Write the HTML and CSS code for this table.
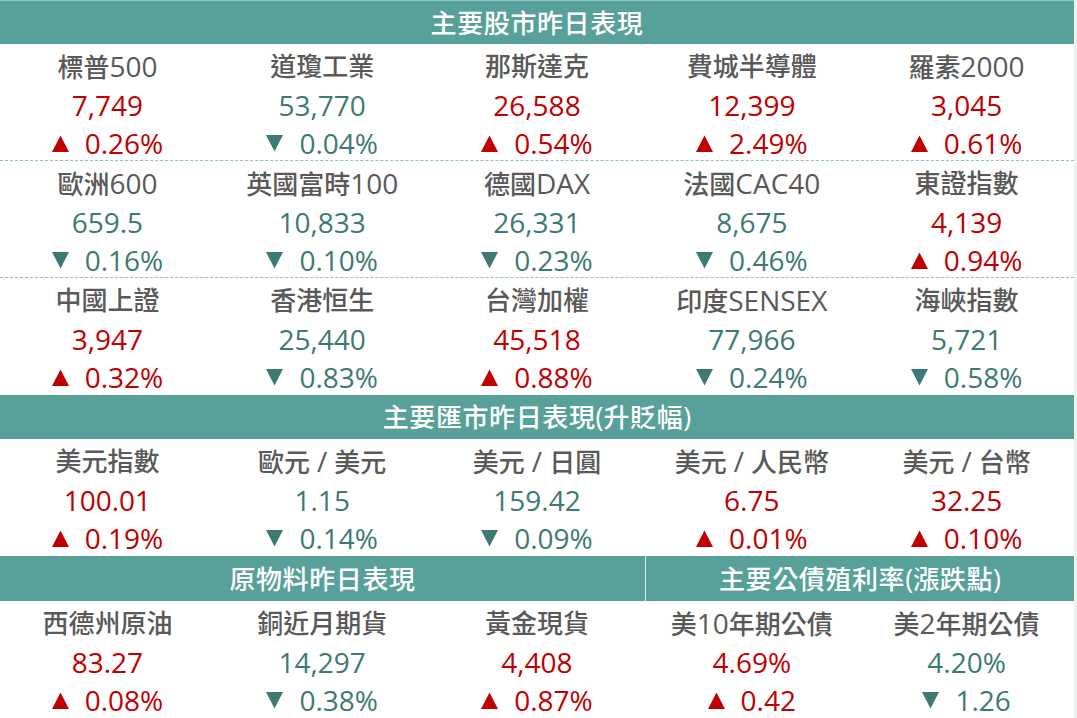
FILE: index.html
```html
<!DOCTYPE html>
<html lang="zh-Hant">
<head>
<meta charset="utf-8">
<title>市場表現</title>
<link rel="stylesheet" href="styles.css">
</head>
<body>
<div class="board">
  <div class="hd hd-top">主要股市昨日表現</div>

  <div class="block dash">
    <div class="cell"><div class="name">標普<span class="la">500</span></div><div class="val up">7,749</div><div class="chg up"><svg class="tri" viewBox="0 0 17 17"><path d="M8.5 0.5L17 17H0Z"/></svg><span>0.26%</span></div></div>
    <div class="cell"><div class="name">道瓊工業</div><div class="val dn">53,770</div><div class="chg dn"><svg class="tri" viewBox="0 0 17 17"><path d="M0 0H17L8.5 16.5Z"/></svg><span>0.04%</span></div></div>
    <div class="cell"><div class="name">那斯達克</div><div class="val up">26,588</div><div class="chg up"><svg class="tri" viewBox="0 0 17 17"><path d="M8.5 0.5L17 17H0Z"/></svg><span>0.54%</span></div></div>
    <div class="cell"><div class="name">費城半導體</div><div class="val up">12,399</div><div class="chg up"><svg class="tri" viewBox="0 0 17 17"><path d="M8.5 0.5L17 17H0Z"/></svg><span>2.49%</span></div></div>
    <div class="cell"><div class="name">羅素<span class="la">2000</span></div><div class="val up">3,045</div><div class="chg up"><svg class="tri" viewBox="0 0 17 17"><path d="M8.5 0.5L17 17H0Z"/></svg><span>0.61%</span></div></div>
  </div>

  <div class="block dash">
    <div class="cell"><div class="name">歐洲<span class="la">600</span></div><div class="val dn">659.5</div><div class="chg dn"><svg class="tri" viewBox="0 0 17 17"><path d="M0 0H17L8.5 16.5Z"/></svg><span>0.16%</span></div></div>
    <div class="cell"><div class="name">英國富時<span class="la">100</span></div><div class="val dn">10,833</div><div class="chg dn"><svg class="tri" viewBox="0 0 17 17"><path d="M0 0H17L8.5 16.5Z"/></svg><span>0.10%</span></div></div>
    <div class="cell"><div class="name">德國<span class="la">DAX</span></div><div class="val dn">26,331</div><div class="chg dn"><svg class="tri" viewBox="0 0 17 17"><path d="M0 0H17L8.5 16.5Z"/></svg><span>0.23%</span></div></div>
    <div class="cell"><div class="name">法國<span class="la">CAC40</span></div><div class="val dn">8,675</div><div class="chg dn"><svg class="tri" viewBox="0 0 17 17"><path d="M0 0H17L8.5 16.5Z"/></svg><span>0.46%</span></div></div>
    <div class="cell"><div class="name">東證指數</div><div class="val up">4,139</div><div class="chg up"><svg class="tri" viewBox="0 0 17 17"><path d="M8.5 0.5L17 17H0Z"/></svg><span>0.94%</span></div></div>
  </div>

  <div class="block">
    <div class="cell"><div class="name">中國上證</div><div class="val up">3,947</div><div class="chg up"><svg class="tri" viewBox="0 0 17 17"><path d="M8.5 0.5L17 17H0Z"/></svg><span>0.32%</span></div></div>
    <div class="cell"><div class="name">香港恒生</div><div class="val dn">25,440</div><div class="chg dn"><svg class="tri" viewBox="0 0 17 17"><path d="M0 0H17L8.5 16.5Z"/></svg><span>0.83%</span></div></div>
    <div class="cell"><div class="name">台灣加權</div><div class="val up">45,518</div><div class="chg up"><svg class="tri" viewBox="0 0 17 17"><path d="M8.5 0.5L17 17H0Z"/></svg><span>0.88%</span></div></div>
    <div class="cell"><div class="name">印度<span class="la">SENSEX</span></div><div class="val dn">77,966</div><div class="chg dn"><svg class="tri" viewBox="0 0 17 17"><path d="M0 0H17L8.5 16.5Z"/></svg><span>0.24%</span></div></div>
    <div class="cell"><div class="name">海峽指數</div><div class="val dn">5,721</div><div class="chg dn"><svg class="tri" viewBox="0 0 17 17"><path d="M0 0H17L8.5 16.5Z"/></svg><span>0.58%</span></div></div>
  </div>

  <div class="hd">主要匯市昨日表現<span class="lh">(</span>升貶幅<span class="lh">)</span></div>

  <div class="block">
    <div class="cell"><div class="name">美元指數</div><div class="val up">100.01</div><div class="chg up"><svg class="tri" viewBox="0 0 17 17"><path d="M8.5 0.5L17 17H0Z"/></svg><span>0.19%</span></div></div>
    <div class="cell"><div class="name">歐元<span class="la sl">/</span>美元</div><div class="val dn">1.15</div><div class="chg dn"><svg class="tri" viewBox="0 0 17 17"><path d="M0 0H17L8.5 16.5Z"/></svg><span>0.14%</span></div></div>
    <div class="cell"><div class="name">美元<span class="la sl">/</span>日圓</div><div class="val dn">159.42</div><div class="chg dn"><svg class="tri" viewBox="0 0 17 17"><path d="M0 0H17L8.5 16.5Z"/></svg><span>0.09%</span></div></div>
    <div class="cell"><div class="name">美元<span class="la sl">/</span>人民幣</div><div class="val up">6.75</div><div class="chg up"><svg class="tri" viewBox="0 0 17 17"><path d="M8.5 0.5L17 17H0Z"/></svg><span>0.01%</span></div></div>
    <div class="cell"><div class="name">美元<span class="la sl">/</span>台幣</div><div class="val up">32.25</div><div class="chg up"><svg class="tri" viewBox="0 0 17 17"><path d="M8.5 0.5L17 17H0Z"/></svg><span>0.10%</span></div></div>
  </div>

  <div class="hd-split">
    <div class="hd">原物料昨日表現</div>
    <div class="hd">主要公債殖利率<span class="lh">(</span>漲跌點<span class="lh">)</span></div>
  </div>

  <div class="block">
    <div class="cell"><div class="name">西德州原油</div><div class="val up">83.27</div><div class="chg up"><svg class="tri" viewBox="0 0 17 17"><path d="M8.5 0.5L17 17H0Z"/></svg><span>0.08%</span></div></div>
    <div class="cell"><div class="name">銅近月期貨</div><div class="val dn">14,297</div><div class="chg dn"><svg class="tri" viewBox="0 0 17 17"><path d="M0 0H17L8.5 16.5Z"/></svg><span>0.38%</span></div></div>
    <div class="cell"><div class="name">黃金現貨</div><div class="val up">4,408</div><div class="chg up"><svg class="tri" viewBox="0 0 17 17"><path d="M8.5 0.5L17 17H0Z"/></svg><span>0.87%</span></div></div>
    <div class="cell"><div class="name">美<span class="la">10</span>年期公債</div><div class="val up">4.69%</div><div class="chg up"><svg class="tri" viewBox="0 0 17 17"><path d="M8.5 0.5L17 17H0Z"/></svg><span>0.42</span></div></div>
    <div class="cell"><div class="name">美<span class="la">2</span>年期公債</div><div class="val dn">4.20%</div><div class="chg dn"><svg class="tri" viewBox="0 0 17 17"><path d="M0 0H17L8.5 16.5Z"/></svg><span>1.26</span></div></div>
  </div>
</div>
</body>
</html>
```

FILE: styles.css
```css
html, body {
  margin: 0;
  padding: 0;
  background: #ffffff;
}

body {
  font-family: "Open Sans", "Noto Sans CJK TC", sans-serif;
  font-size: 26px;
  font-weight: 500;
}

.board {
  width: 1074px;
  border-right: 3px solid #eef2f1;
}

.hd {
  height: 44px;
  background: #58a19a;
  color: #ffffff;
  display: flex;
  align-items: center;
  justify-content: center;
  font-size: 26px;
  letter-spacing: 0.6px;
  line-height: 44px;
  white-space: pre;
}

.hd .lh {
  font-size: 27px;
  letter-spacing: 0;
}

.hd-top {
  box-sizing: border-box;
  border-top: 1px solid #8ec7c0;
}

.hd-split {
  display: grid;
  grid-template-columns: 645px 1fr;
  column-gap: 1px;
  background: #d8ecea;
}

.hd-split .hd {
  height: 45px;
}

.block {
  display: grid;
  grid-template-columns: repeat(5, 1fr);
  height: 117px;
  box-sizing: border-box;
}

.block.dash {
  border-bottom: 1px dashed #8fc2bc;
}

.cell {
  display: flex;
  flex-direction: column;
  align-items: center;
  padding-top: 3px;
}

.cell > div {
  height: 38.5px;
  line-height: 38.5px;
  white-space: nowrap;
}

.name {
  color: #595959;
}

.la {
  font-size: 28px;
}

.sl {
  margin: 0 7px;
}

.val,
.chg {
  font-size: 28px;
}

.up {
  color: #c00000;
}

.dn {
  color: #3c7a73;
}

.chg {
  display: flex;
  align-items: center;
  gap: 16px;
}

.tri {
  width: 17px;
  height: 17px;
  fill: currentColor;
  flex: none;
}
```
